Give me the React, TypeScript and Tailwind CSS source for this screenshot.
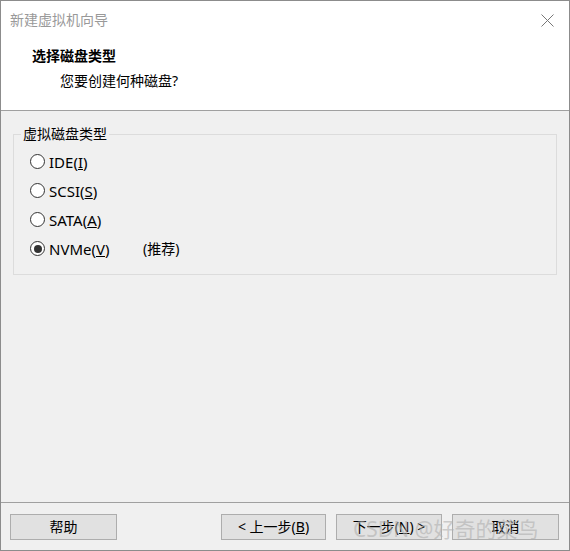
import React from 'react';

type RadioProps = {
  label: React.ReactNode;
  checked?: boolean;
  extra?: string;
};

const Radio: React.FC<RadioProps> = ({ label, checked, extra }) => {
  return (
    <div className="flex items-center h-[29px]">
      <span className="w-[15px] h-[15px] rounded-full border border-[#333333] bg-white flex items-center justify-center">
        {checked && <span className="w-[8px] h-[8px] rounded-full bg-[#333333]"></span>}
      </span>
      <span className="ml-[4px] w-[94px] text-[15px] leading-[20px] text-black">{label}</span>
      {extra && <span className="text-[14px] leading-[20px] text-black">{extra}</span>}
    </div>
  );
};

const Button: React.FC<{ w: string; children: React.ReactNode }> = ({ w, children }) => {
  return (
    <div
      className={
        'h-[26px] border border-[#adadad] bg-[#e1e1e1] flex items-center justify-center text-[14px] leading-[20px] text-black ' +
        w
      }
    >
      {children}
    </div>
  );
};

export default function App() {
  return (
    <div className="relative w-[570px] h-[551px] border border-[#8c8c8c] bg-[#f0f0f0] flex flex-col font-['Noto_Sans','Noto_Sans_CJK_SC',sans-serif]">
      {/* header */}
      <div className="h-[110px] bg-white border-b border-[#a0a0a0] flex flex-col">
        <div className="h-[38px] flex items-center justify-between pl-[9px] pr-[15px]">
          <span className="text-[14px] leading-[20px] text-[#999999]">新建虚拟机向导</span>
          <svg width="13" height="13" viewBox="0 0 13 13">
            <path d="M0.5 0.5 L12.5 12.5 M12.5 0.5 L0.5 12.5" stroke="#777777" strokeWidth="1" />
          </svg>
        </div>
        <div className="pl-[31px] mt-[7px] text-[14px] leading-[20px] font-bold text-black">选择磁盘类型</div>
        <div className="pl-[59px] mt-[5px] text-[14px] leading-[20px] text-black">您要创建何种磁盘?</div>
      </div>

      {/* body */}
      <div className="flex-1 px-[12px] pt-[14px]">
        <fieldset className="border border-[#dcdcdc] pl-[16px] pt-[4px] pb-[11px]">
          <legend className="ml-[-9px] px-[2px] text-[14px] leading-[18px] text-black">虚拟磁盘类型</legend>
          <Radio label={<>IDE(<u>I</u>)</>} />
          <Radio label={<>SCSI(<u>S</u>)</>} />
          <Radio label={<>SATA(<u>A</u>)</>} />
          <Radio label={<>NVMe(<u>V</u>)</>} checked extra="(推荐)" />
        </fieldset>
      </div>

      {/* footer */}
      <div className="border-t border-[#a0a0a0] pt-[11px] pb-[10px] pl-[9px] pr-[10px] flex justify-between">
        <Button w="w-[107px]">帮助</Button>
        <div className="flex gap-[10px]">
          <Button w="w-[105px]">
            &lt; 上一步(<u>B</u>)
          </Button>
          <Button w="w-[106px]">
            下一步(<u>N</u>) &gt;
          </Button>
          <Button w="w-[107px]">取消</Button>
        </div>
      </div>

      <div className="absolute left-[352px] top-[514px] text-[21px] leading-[28px] text-[#b0b0b0]/60 pointer-events-none whitespace-nowrap">
        CSDN @好奇的菜鸟
      </div>
    </div>
  );
}
